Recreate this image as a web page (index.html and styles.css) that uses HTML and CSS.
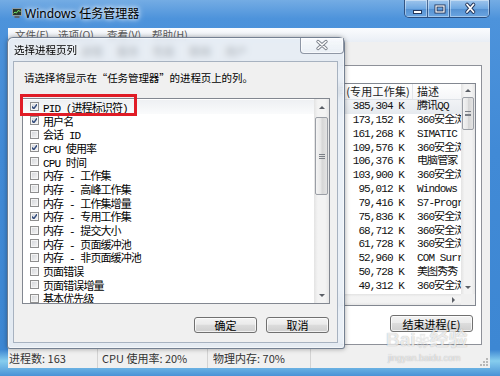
FILE: index.html
```html
<!DOCTYPE html>
<html>
<head>
    <meta charset="utf-8">
    <title>Windows 任务管理器</title>
    <link rel="stylesheet" href="styles.css">
</head>
<body>
<div class="window">
    <div class="titlebar">
        <svg class="app-icon" width="10" height="10" viewBox="0 0 10 10">
            <rect x="0.5" y="0.5" width="9" height="7" fill="#28352c" stroke="#8d9aa3"/>
            <polyline points="1.5,5.5 3,4 4.5,5 6,2.5 8.5,3.5" fill="none" stroke="#6fe36a" stroke-width="1"/>
            <rect x="2.5" y="8" width="5" height="2" fill="#5b6470"/>
        </svg>
        <span class="title">Windows 任务管理器</span>
        <div class="caption-btns">
            <div class="cap-btn cap-min">
                <svg width="21" height="16" viewBox="0 0 21 16"><rect x="7.5" y="9.5" width="8" height="3" fill="#fff" stroke="#24365a"/></svg>
            </div>
            <div class="cap-btn cap-max">
                <svg width="20" height="16" viewBox="0 0 20 16"><rect x="7" y="5" width="8" height="6" fill="none" stroke="#24365a" stroke-width="3"/><rect x="7" y="5" width="8" height="6" fill="none" stroke="#fff" stroke-width="1.2"/></svg>
            </div>
            <div class="cap-btn cap-close">
                <svg width="38" height="16" viewBox="0 0 38 16"><path d="M16 3.5 L22.5 11 M22.5 3.5 L16 11" stroke="#24365a" stroke-width="3.6" stroke-linecap="round"/><path d="M16 3.5 L22.5 11 M22.5 3.5 L16 11" stroke="#fff" stroke-width="1.8" stroke-linecap="round"/></svg>
            </div>
        </div>
    </div>

    <div class="client">
        <div class="menubar">
            <span class="menu-item m-file">文件(F)</span>
            <span class="menu-item m-opt">选项(O)</span>
            <span class="menu-item m-view">查看(V)</span>
            <span class="menu-item">帮助(H)</span>
        </div>

        <div class="tabs">
            <span class="tab">应用程序</span>
            <span class="tab active">进程</span>
            <span class="tab">服务</span>
            <span class="tab">性能</span>
            <span class="tab">联网</span>
            <span class="tab">用户</span>
        </div>

        <div class="tab-panel">
            <div class="proc-box">
                <div class="proc-main">
                    <div class="proc-head">
                        <span class="cell">映像名称</span>
                        <span class="cell mem">内存 (专用工作集)</span>
                        <span class="cell desc">描述</span>
                    </div>
                    <div class="proc-row focus"><span></span><span class="mem">385,304 K</span><span class="desc">腾讯QQ</span></div>
                    <div class="proc-row"><span></span><span class="mem">173,152 K</span><span class="desc">360安全浏览器</span></div>
                    <div class="proc-row"><span></span><span class="mem">161,268 K</span><span class="desc">SIMATIC</span></div>
                    <div class="proc-row"><span></span><span class="mem">109,576 K</span><span class="desc">360安全浏览器</span></div>
                    <div class="proc-row"><span></span><span class="mem">106,376 K</span><span class="desc">电脑管家</span></div>
                    <div class="proc-row"><span></span><span class="mem">103,900 K</span><span class="desc">360安全浏览器</span></div>
                    <div class="proc-row"><span></span><span class="mem">95,012 K</span><span class="desc">Windows</span></div>
                    <div class="proc-row"><span></span><span class="mem">79,416 K</span><span class="desc">S7-Program</span></div>
                    <div class="proc-row"><span></span><span class="mem">75,836 K</span><span class="desc">360安全浏览器</span></div>
                    <div class="proc-row"><span></span><span class="mem">68,712 K</span><span class="desc">360安全浏览器</span></div>
                    <div class="proc-row"><span></span><span class="mem">61,728 K</span><span class="desc">360安全浏览器</span></div>
                    <div class="proc-row"><span></span><span class="mem">52,960 K</span><span class="desc">COM Surrogate</span></div>
                    <div class="proc-row"><span></span><span class="mem">50,728 K</span><span class="desc">美图秀秀</span></div>
                    <div class="proc-row"><span></span><span class="mem">49,312 K</span><span class="desc">360安全浏览器</span></div>
                </div>
                <div class="vscroll proc-vscroll">
                    <div class="sb-btn"><span class="arrow-up"></span></div>
                    <div class="sb-track">
                        <div class="sb-thumb proc-thumb"><span class="grip"></span></div>
                    </div>
                    <div class="sb-btn"><span class="arrow-down"></span></div>
                </div>
                <div class="hscroll">
                    <div class="sb-track"></div>
                    <div class="sb-btn"><span class="arrow-right"></span></div>
                </div>
                <div class="sb-corner"></div>
            </div>
            <button class="btn end-btn">结束进程(E)</button>
        </div>

        <div class="statusbar">
            <span class="status-cell s-count">进程数: 163</span>
            <span class="status-cell s-cpu">CPU 使用率: 20%</span>
            <span class="status-cell s-mem">物理内存: 70%</span>
            <span class="status-cell s-rest">
                <svg class="grip-corner" width="8" height="8" viewBox="0 0 8 8">
                    <rect x="6" y="0" width="2" height="2" fill="#b8b8b8"/>
                    <rect x="3" y="3" width="2" height="2" fill="#b8b8b8"/>
                    <rect x="6" y="3" width="2" height="2" fill="#b8b8b8"/>
                    <rect x="0" y="6" width="2" height="2" fill="#b8b8b8"/>
                    <rect x="3" y="6" width="2" height="2" fill="#b8b8b8"/>
                    <rect x="6" y="6" width="2" height="2" fill="#b8b8b8"/>
                </svg>
            </span>
        </div>
    </div>

    <div class="frame-bottom"></div>

    <!-- column chooser dialog, sits over the task manager -->
    <div class="dialog">
        <div class="dlg-titlebar">
            <span class="dlg-title">选择进程页列</span>
            <div class="dlg-close">
                <svg width="42" height="15" viewBox="0 0 42 15"><path d="M17 3.5 L25 10.5 M25 3.5 L17 10.5" stroke="#7d838c" stroke-width="3.4" stroke-linecap="round"/><path d="M17 3.5 L25 10.5 M25 3.5 L17 10.5" stroke="#fff" stroke-width="1.6" stroke-linecap="round"/></svg>
            </div>
        </div>
        <div class="dlg-client">
            <p class="dlg-label">请选择将显示在“任务管理器”的进程页上的列。</p>
            <div class="col-list">
                <div class="col-items">
                    <div class="col-item focus"><span class="check on"></span>PID (进程标识符)</div>
                    <div class="col-item"><span class="check on"></span>用户名</div>
                    <div class="col-item"><span class="check"></span>会话 ID</div>
                    <div class="col-item"><span class="check on"></span>CPU 使用率</div>
                    <div class="col-item"><span class="check"></span>CPU 时间</div>
                    <div class="col-item"><span class="check"></span>内存 - 工作集</div>
                    <div class="col-item"><span class="check"></span>内存 - 高峰工作集</div>
                    <div class="col-item"><span class="check"></span>内存 - 工作集增量</div>
                    <div class="col-item"><span class="check on"></span>内存 - 专用工作集</div>
                    <div class="col-item"><span class="check"></span>内存 - 提交大小</div>
                    <div class="col-item"><span class="check"></span>内存 - 页面缓冲池</div>
                    <div class="col-item"><span class="check"></span>内存 - 非页面缓冲池</div>
                    <div class="col-item"><span class="check"></span>页面错误</div>
                    <div class="col-item"><span class="check"></span>页面错误增量</div>
                    <div class="col-item"><span class="check"></span>基本优先级</div>
                </div>
                <div class="vscroll dlg-vscroll">
                    <div class="sb-btn"><span class="arrow-up"></span></div>
                    <div class="sb-track">
                        <div class="sb-thumb dlg-thumb"><span class="grip"></span></div>
                    </div>
                    <div class="sb-btn"><span class="arrow-down"></span></div>
                </div>
            </div>
            <div class="dlg-buttons">
                <button class="btn">确定</button>
                <button class="btn">取消</button>
            </div>
        </div>
    </div>

    <div class="annotation"></div>

    <div class="watermark">
        <div class="wm-logo">Bai<span class="wm-paw">❀</span>经验</div>
        <div class="wm-url">jingyan.baidu.com</div>
    </div>
</div>
</body>
</html>
```

FILE: styles.css
```css
* {
    margin: 0;
    padding: 0;
    box-sizing: border-box;
}

body {
    width: 500px;
    height: 376px;
    overflow: hidden;
    font-family: "Noto Sans CJK SC", "Noto Sans", sans-serif;
    font-size: 11px;
    color: #000;
}

.window {
    position: relative;
    width: 500px;
    height: 376px;
    display: flex;
    flex-direction: column;
    background: linear-gradient(180deg, #74ace4 0%, #4d93db 5%, #418ad6 40%, #3d87d3 93%, #86cdee 96%, #4a92d6 100%);
}

/* title bar */
.titlebar {
    height: 28px;
    flex-shrink: 0;
    display: flex;
    align-items: flex-start;
}

.app-icon {
    margin: 8px 0 0 12px;
}

.title {
    margin: 6px 0 0 3px;
    font-family: "Noto Sans", "Noto Sans CJK SC", sans-serif;
    font-size: 12px;
    line-height: 16px;
    color: #000;
    text-shadow: 0 0 4px #fff, 0 0 7px rgba(255,255,255,0.9);
}

.caption-btns {
    margin-left: auto;
    margin-right: 10px;
    display: flex;
    height: 18px;
    border: 1px solid rgba(20,40,80,0.65);
    border-top: none;
    border-radius: 0 0 5px 5px;
    overflow: hidden;
}

.cap-btn {
    height: 17px;
    display: flex;
    align-items: center;
    justify-content: center;
    background: linear-gradient(180deg, rgba(255,255,255,0.3), rgba(255,255,255,0.08) 50%, rgba(20,70,140,0.18) 51%, rgba(255,255,255,0.15));
    box-shadow: inset 0 0 0 1px rgba(255,255,255,0.4);
}

.cap-min { width: 23px; border-right: 1px solid rgba(20,40,80,0.55); }
.cap-max { width: 22px; border-right: 1px solid rgba(20,40,80,0.55); }
.cap-close { width: 39px; }

/* main client */
.client {
    flex: 1;
    margin: 0 10px 0 8px;
    background: #f0f0f0;
    display: flex;
    flex-direction: column;
}

.menubar {
    height: 14px;
    padding-left: 7px;
    display: flex;
    background: linear-gradient(180deg, #fbfcfe, #e9eef5);
}

.menu-item {
    font-size: 10.5px;
    line-height: 14px;
    color: #5c5c5c;
    width: 40px;
}

.m-file { width: 43px; }
.m-opt { width: 49px; }
.m-view { width: 45px; }

.tabs {
    height: 23px;
    padding-left: 8px;
    display: flex;
    align-items: flex-start;
}

.tab {
    margin-top: 2px;
    padding: 0 7px;
    font-size: 11px;
    font-weight: bold;
    line-height: 14px;
    color: #333;
}

.tab-panel {
    height: 280px;
    margin: 0 8px 0 6px;
    border: 1px solid #8e9199;
    background: #fff;
    display: flex;
    flex-direction: column;
    align-items: flex-end;
}

/* process list */
.proc-box {
    align-self: stretch;
    height: 223px;
    margin: 17px 5px 0 5px;
    border: 1px solid #828790;
    background: #fff;
    display: grid;
    grid-template-columns: 1fr 14px;
    grid-template-rows: 1fr 11px;
    overflow: hidden;
}

.proc-main {
    overflow: hidden;
}

.proc-head {
    height: 16px;
    display: grid;
    grid-template-columns: 1fr 96px 48px;
    border-bottom: 1px solid #dfe3e8;
    background: linear-gradient(180deg, #ffffff, #f5f6f8);
    font-size: 11px;
    line-height: 15px;
    color: #222;
}

.proc-head .cell {
    border-right: 1px solid #e2e5ea;
    padding-left: 4px;
    white-space: nowrap;
    overflow: hidden;
}

.proc-head .mem {
    text-align: right;
    padding-right: 2px;
    letter-spacing: 0.2px;
}

.proc-head .desc {
    border-right: none;
}

.proc-row {
    height: 13.85px;
    display: grid;
    grid-template-columns: 1fr 96px 48px;
    font-family: "Liberation Mono", "Noto Sans CJK SC", monospace;
    font-size: 11px;
    line-height: 13.85px;
    letter-spacing: -0.9px;
    color: #111;
}

.proc-row.focus {
    background: linear-gradient(180deg, #f1f3f6, #e6eaef);
}

.proc-row .mem {
    text-align: right;
    padding-right: 9px;
    white-space: nowrap;
}

.proc-row .desc {
    padding-left: 4px;
    white-space: nowrap;
    overflow: hidden;
}

/* scrollbars */
.vscroll {
    display: flex;
    flex-direction: column;
    background: linear-gradient(90deg, #e3e3e3, #f3f3f3 25%, #f3f3f3 75%, #e6e6e6);
}

.hscroll {
    display: flex;
    background: linear-gradient(180deg, #e3e3e3, #f3f3f3 25%, #f3f3f3 75%, #e6e6e6);
}

.sb-corner {
    background: #f0f0f0;
}

.sb-btn {
    flex-shrink: 0;
    display: flex;
    align-items: center;
    justify-content: center;
}

.proc-vscroll .sb-btn { height: 13px; }
.dlg-vscroll .sb-btn { height: 16px; }
.hscroll .sb-btn { width: 16px; }

.sb-track {
    flex: 1;
}

.arrow-up,
.arrow-down {
    width: 0;
    height: 0;
    border-left: 3px solid transparent;
    border-right: 3px solid transparent;
}

.arrow-up { border-bottom: 3px solid #5b5f66; }
.arrow-down { border-top: 3px solid #5b5f66; }

.arrow-right {
    width: 0;
    height: 0;
    border-top: 3px solid transparent;
    border-bottom: 3px solid transparent;
    border-left: 3px solid #5b5f66;
}

.sb-thumb {
    margin: 0 1px;
    border: 1px solid #9a9ea5;
    border-radius: 2px;
    background: linear-gradient(90deg, #f4f4f4, #e6e6e6 45%, #d6d6d6 55%, #e4e4e4);
    display: flex;
    align-items: center;
    justify-content: center;
}

.proc-thumb { height: 33px; }

.dlg-thumb {
    height: 78px;
    margin-top: 2px;
}

.grip {
    width: 6px;
    height: 5px;
    border-top: 1px solid #7a7f86;
    border-bottom: 1px solid #7a7f86;
    background: linear-gradient(180deg, transparent 1.5px, #7a7f86 1.5px, #7a7f86 2.5px, transparent 2.5px);
}

/* buttons */
.btn {
    height: 17px;
    border: 1px solid #707070;
    border-radius: 3px;
    background: linear-gradient(180deg, #f3f3f3 0%, #ebebeb 45%, #dcdcdc 50%, #cfcfcf 100%);
    box-shadow: inset 0 0 0 1px rgba(255,255,255,0.7);
    font-family: "Noto Sans CJK SC", sans-serif;
    font-size: 11px;
    line-height: 14px;
    color: #000;
}

.end-btn {
    width: 83px;
    margin: 9px 8px 0 0;
}

/* status bar */
.statusbar {
    margin-top: 4px;
    height: 19px;
    display: flex;
    align-items: center;
    font-size: 11px;
    color: #333;
}

.status-cell {
    height: 19px;
    line-height: 19px;
    white-space: nowrap;
}

.s-count { width: 89px; padding-left: 1px; }
.s-cpu { width: 110px; padding-left: 4px; border-left: 1px solid #d3d3d3; }
.s-mem { width: 103px; padding-left: 5px; border-left: 1px solid #d3d3d3; }

.s-rest {
    flex: 1;
    border-left: 1px solid #d3d3d3;
    display: flex;
    justify-content: flex-end;
    align-items: flex-end;
    padding: 0 2px 2px 0;
}

.frame-bottom {
    height: 8px;
    flex-shrink: 0;
}

/* dialog */
.dialog {
    position: absolute;
    left: 7px;
    top: 37px;
    width: 338px;
    height: 312px;
    border: 1px solid rgba(40,55,80,0.6);
    border-radius: 6px 6px 3px 3px;
    background: rgba(228,236,245,0.78);
    backdrop-filter: blur(3px);
    box-shadow: inset 0 0 0 1px rgba(255,255,255,0.55), 0 0 5px rgba(0,0,0,0.35);
    padding: 0 6px 5px 5px;
    display: flex;
    flex-direction: column;
}

.dlg-titlebar {
    height: 23px;
    margin: 0 -6px 0 -5px;
    padding-left: 6px;
    display: flex;
    align-items: flex-start;
}

.dlg-title {
    margin-top: 5px;
    font-size: 10.5px;
    line-height: 14px;
    color: #000;
    text-shadow: 0 0 4px #fff;
}

.dlg-close {
    margin-left: auto;
    width: 44px;
    height: 16px;
    border: 1px solid rgba(40,55,80,0.5);
    border-top: none;
    border-radius: 0 0 4px 4px;
    background: linear-gradient(180deg, rgba(255,255,255,0.7), rgba(235,240,246,0.5));
    box-shadow: inset 0 0 0 1px rgba(255,255,255,0.6);
    display: flex;
    align-items: center;
    justify-content: center;
}

.dlg-client {
    flex: 1;
    background: #f0f0f0;
    border: 1px solid #a7b2c0;
    display: flex;
    flex-direction: column;
}

.dlg-label {
    padding: 9px 10px 0;
    font-size: 10.5px;
    line-height: 13px;
    letter-spacing: -0.1px;
    white-space: nowrap;
}

.col-list {
    height: 206px;
    margin: 14px 7px 0 8px;
    border: 1px solid #828790;
    background: #fff;
    display: grid;
    grid-template-columns: 1fr 15px;
    overflow: hidden;
}

.col-items {
    padding-top: 1px;
    overflow: hidden;
}

.col-item {
    height: 13.7px;
    display: flex;
    align-items: center;
    font-family: "Liberation Mono", "Noto Sans CJK SC", monospace;
    font-size: 11px;
    letter-spacing: -0.9px;
    white-space: nowrap;
}

.col-item.focus {
    background: linear-gradient(180deg, #eef0f3, #fafbfc);
}

.check {
    width: 9px;
    height: 9px;
    margin: 0 4px 0 7px;
    flex-shrink: 0;
    border: 1px solid #8f8f8f;
    background: linear-gradient(135deg, #d2d4d8, #f6f6f6);
    box-shadow: inset 0 0 0 1px #f4f4f4;
}

.check.on {
    background: no-repeat center / 7px 7px url("data:image/svg+xml;utf8,<svg xmlns='http://www.w3.org/2000/svg' viewBox='0 0 7 7'><path d='M0.8 3.6 L2.8 5.6 L6.3 1' fill='none' stroke='%23344d7e' stroke-width='1.5'/></svg>"), linear-gradient(135deg, #d2d4d8, #f6f6f6);
}

.dlg-buttons {
    margin-top: 13px;
    padding-right: 8px;
    display: flex;
    justify-content: flex-end;
    gap: 9px;
}

.dlg-buttons .btn {
    width: 63px;
    height: 16px;
}

/* red highlight drawn over the first row */
.annotation {
    position: absolute;
    left: 20px;
    top: 94px;
    width: 117px;
    height: 22px;
    border: 3.5px solid #e01c26;
}

/* site watermark */
.watermark {
    position: absolute;
    left: 386px;
    top: 330px;
    color: rgba(255,255,255,0.75);
    text-shadow: 0 0 1px rgba(0,0,0,0.35);
}

.wm-logo {
    font-family: "Liberation Sans", "Noto Sans CJK SC", sans-serif;
    font-size: 19px;
    font-weight: bold;
    line-height: 20px;
    white-space: nowrap;
}

.wm-paw {
    font-size: 14px;
}

.wm-url {
    margin-top: 2px;
    font-family: "Liberation Sans", sans-serif;
    font-size: 9px;
    line-height: 10px;
    color: rgba(255,255,255,0.7);
    padding-left: 2px;
}
```
